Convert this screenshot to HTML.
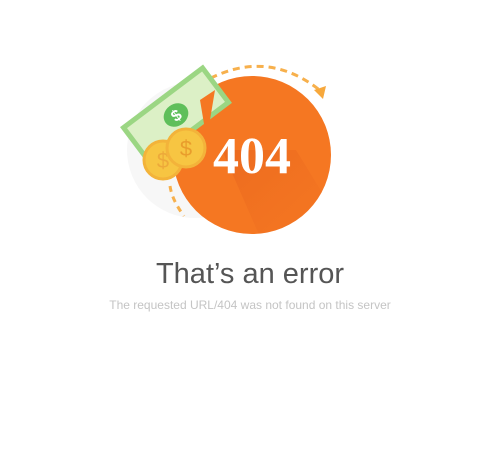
<!DOCTYPE html>
<html><head><style>
html,body{margin:0;padding:0;background:#fff;width:500px;height:450px;overflow:hidden;font-family:"Liberation Sans",sans-serif}
.t{position:absolute;left:0;width:500px;text-align:center}
</style></head><body>
<svg width="500" height="450" style="position:absolute;left:0;top:0">
<defs>
<linearGradient id="sh" x1="0" y1="0" x2="1" y2="1"><stop offset="0" stop-color="#d9531a" stop-opacity=".35"/><stop offset="1" stop-color="#f26d1e" stop-opacity="0"/></linearGradient>
<clipPath id="cc"><circle cx="252" cy="155" r="79"/></clipPath>
</defs>
<circle cx="195" cy="150" r="68" fill="#f7f7f7"/>
<path d="M200 84 Q265 45 322 92" fill="none" stroke="#f7b04c" stroke-width="3" stroke-dasharray="7 5"/>
<polygon points="314,90 326,86 323,99" fill="#f7a83c"/>
<circle cx="252" cy="155" r="79" fill="#f57722"/>
<g clip-path="url(#cc)"><polygon points="222,150 296,150 345,230 270,260" fill="url(#sh)"/></g>
<path d="M170 186 Q172 200 184 216" fill="none" stroke="#f7b04c" stroke-width="3" stroke-dasharray="6 5"/>
<g transform="translate(176,115) rotate(-37)">
<rect x="-52" y="-24" width="104" height="48" fill="#9bd683"/>
<rect x="-47" y="-19" width="94" height="38" fill="#dcf0c6"/>
<ellipse cx="0" cy="0" rx="13" ry="11" fill="#5fbf5a"/>
<text x="0" y="6" font-size="16" font-weight="bold" fill="#fff" text-anchor="middle" font-family="Liberation Sans">$</text>
</g>
<polygon points="200,100 215,90 210,120 205,130" fill="#f57722"/>
<circle cx="163" cy="160" r="19" fill="#f7c542" stroke="#f3b33a" stroke-width="3"/>
<text x="163" y="168" font-size="22" fill="#eda93a" text-anchor="middle">$</text>
<circle cx="186" cy="148" r="19" fill="#f7c542" stroke="#f3b33a" stroke-width="3"/>
<text x="186" y="156" font-size="22" fill="#e99d2c" text-anchor="middle">$</text>
<text x="252" y="173" font-size="52" font-weight="bold" fill="#fff" text-anchor="middle" font-family="Liberation Serif">404</text>
</svg>
<div class="t" style="top:258px;font-size:29px;color:#555">That’s an error</div>
<div class="t" style="top:298px;font-size:12px;color:#c4c4c4">The requested URL/404 was not found on this server</div>
</body></html>
